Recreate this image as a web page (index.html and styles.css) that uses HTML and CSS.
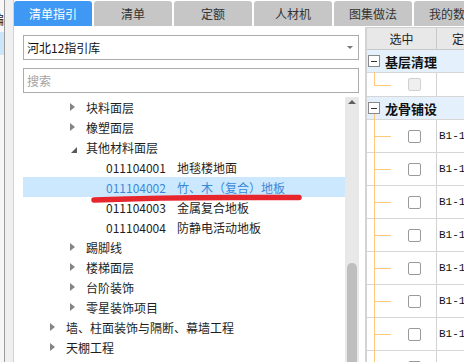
FILE: index.html
```html
<!DOCTYPE html>
<html>
  <head>
    <title>清单指引</title>
    <link rel="stylesheet" href="styles.css">
  </head>
  <body>
    <div class="app">
      <div class="side">
        <div class="side-edge">
          <div class="side-top"><span class="side-glyph">编</span></div>
          <div class="side-sel"></div>
        </div>
        <div class="side-fill"></div>
      </div>

      <div class="main">
        <div class="tabs">
          <div class="tab active">清单指引</div>
          <div class="tab">清单</div>
          <div class="tab">定额</div>
          <div class="tab">人材机</div>
          <div class="tab">图集做法</div>
          <div class="tab">我的数据</div>
        </div>

        <div class="content">
          <div class="guide">
            <div class="select">河北12指引库<span class="caret"></span></div>
            <div class="search">搜索</div>

            <div class="tree-wrap">
              <div class="tree">
                <div class="node l2"><svg class="arrow" viewBox="0 0 5 8"><polygon points="0,0 5,4 0,8" /></svg>块料面层</div>
                <div class="node l2"><svg class="arrow" viewBox="0 0 5 8"><polygon points="0,0 5,4 0,8" /></svg>橡塑面层</div>
                <div class="node l2"><svg class="arrow open" viewBox="0 0 6 6"><polygon points="6,0 6,6 0,6" /></svg>其他材料面层</div>
                <div class="node l3"><span class="code">011104001</span>地毯楼地面</div>
                <div class="node l3 selected"><span class="code">011104002</span>竹、木（复合）地板</div>
                <div class="node l3"><span class="code">011104003</span>金属复合地板</div>
                <div class="node l3"><span class="code">011104004</span>防静电活动地板</div>
                <div class="node l2"><svg class="arrow" viewBox="0 0 5 8"><polygon points="0,0 5,4 0,8" /></svg>踢脚线</div>
                <div class="node l2"><svg class="arrow" viewBox="0 0 5 8"><polygon points="0,0 5,4 0,8" /></svg>楼梯面层</div>
                <div class="node l2"><svg class="arrow" viewBox="0 0 5 8"><polygon points="0,0 5,4 0,8" /></svg>台阶装饰</div>
                <div class="node l2"><svg class="arrow" viewBox="0 0 5 8"><polygon points="0,0 5,4 0,8" /></svg>零星装饰项目</div>
                <div class="node l1"><svg class="arrow" viewBox="0 0 5 8"><polygon points="0,0 5,4 0,8" /></svg>墙、柱面装饰与隔断、幕墙工程</div>
                <div class="node l1"><svg class="arrow" viewBox="0 0 5 8"><polygon points="0,0 5,4 0,8" /></svg>天棚工程</div>
              </div>
              <div class="scrollbar">
                <span class="scroll-up"></span>
                <div class="thumb"></div>
              </div>
            </div>

            <!-- red hand-drawn underline over the selected item -->
            <svg class="mark" viewBox="0 0 351 335">
              <path d="M80 173 Q146 170.5 218 170.5 L285 170.5" />
            </svg>
          </div>

          <div class="grid">
            <div class="row head">
              <div class="c1">选中</div>
              <div class="c2">定额编号</div>
            </div>
            <div class="row group">
              <span class="minus"><span></span></span><b>基层清理</b>
            </div>
            <div class="row short">
              <div class="c1 child last"><span class="check off"></span></div>
              <div class="c2"></div>
            </div>
            <div class="row group more">
              <span class="minus"><span></span></span><b>龙骨铺设</b>
            </div>
            <div class="row item">
              <div class="c1 child"><span class="check"></span></div>
              <div class="c2">B1-15</div>
            </div>
            <div class="row item">
              <div class="c1 child"><span class="check"></span></div>
              <div class="c2">B1-15</div>
            </div>
            <div class="row item">
              <div class="c1 child"><span class="check"></span></div>
              <div class="c2">B1-15</div>
            </div>
            <div class="row item">
              <div class="c1 child"><span class="check"></span></div>
              <div class="c2">B1-15</div>
            </div>
            <div class="row item">
              <div class="c1 child"><span class="check"></span></div>
              <div class="c2">B1-15</div>
            </div>
            <div class="row item">
              <div class="c1 child"><span class="check"></span></div>
              <div class="c2">B1-16</div>
            </div>
            <div class="row item">
              <div class="c1 child"><span class="check"></span></div>
              <div class="c2">B1-16</div>
            </div>
            <div class="row item">
              <div class="c1 child"><span class="check"></span></div>
              <div class="c2"></div>
            </div>
          </div>
        </div>
      </div>
    </div>
  </body>
</html>
```

FILE: styles.css
```css
body {
  margin: 0;
  background: #fff;
  font-family: "Noto Sans CJK SC", "Noto Sans", sans-serif;
  font-size: 12px;
  color: #1e1e1e;
}

.app {
  display: flex;
  width: 464px;
  height: 362px;
  overflow: hidden;
}

/* left edge strip */
.side {
  display: flex;
  width: 14px;
  flex-shrink: 0;
  border-right: 1px solid #d2d2d2;
  box-sizing: border-box;
}

.side-edge {
  width: 5px;
  border-right: 1px solid #9c9c9c;
  box-sizing: border-box;
  overflow: hidden;
  background: #f7f7f7;
}

.side-top {
  height: 32px;
  padding-top: 12px;
  box-sizing: border-box;
  line-height: 14px;
  white-space: nowrap;
}

.side-glyph {
  display: inline-block;
  margin-left: -9px;
  font-size: 13px;
}

.side-sel {
  height: 23px;
  background: #cde5f8;
}

.side-fill {
  flex: 1;
  background: #f0f0f0;
}

.main {
  flex: 1;
  min-width: 0;
  display: flex;
  flex-direction: column;
}

/* tabs */
.tabs {
  display: flex;
  gap: 2px;
  height: 27px;
  padding-top: 1px;
  box-sizing: border-box;
  overflow: hidden;
}

.tab {
  flex: 0 0 78px;
  height: 25px;
  line-height: 25px;
  text-align: center;
  background: #c6c6c6;
  color: #333;
  border-radius: 3px 3px 0 0;
}

.tab.active {
  background: #3f98f3;
  color: #fff;
}

.content {
  flex: 1;
  min-height: 0;
  display: flex;
}

/* guide panel */
.guide {
  position: relative;
  width: 351px;
  flex-shrink: 0;
  padding: 8px 6px 0 9px;
  box-sizing: border-box;
  display: flex;
  flex-direction: column;
}

.select, .search {
  height: 25px;
  border: 1px solid #acacac;
  box-sizing: border-box;
  padding: 0 3px;
  display: flex;
  align-items: center;
}

.select {
  justify-content: space-between;
  color: #111;
}

.caret {
  width: 0;
  height: 0;
  border-left: 3px solid transparent;
  border-right: 3px solid transparent;
  border-top: 3px solid #777;
  margin-right: 2px;
}

.search {
  margin-top: 8px;
  color: #a3a3a3;
}

.tree-wrap {
  margin-top: 4px;
  flex: 1;
  min-height: 0;
  display: flex;
  overflow: hidden;
}

.tree {
  flex: 1;
}

.node {
  height: 20px;
  display: flex;
  align-items: center;
  white-space: nowrap;
  color: #1e1e1e;
}

.node.l1 { padding-left: 27px; }
.node.l2 { padding-left: 47px; }
.node.l3 { padding-left: 83px; }

.node.selected {
  background: #cce8ff;
  color: #3a88d8;
}

.arrow {
  width: 5px;
  height: 8px;
  margin-right: 11px;
  fill: #858585;
}

.arrow.open {
  width: 6px;
  height: 6px;
  margin: 6px 9px 0 1px;
  fill: #5a5a5a;
}

.code {
  display: inline-block;
  width: 71px;
}

.scrollbar {
  width: 14px;
  background: #e8e8e8;
  display: flex;
  flex-direction: column;
  align-items: center;
}

.scroll-up {
  margin-top: 3px;
  width: 0;
  height: 0;
  border-left: 4px solid transparent;
  border-right: 4px solid transparent;
  border-bottom: 4px solid #606060;
}

.thumb {
  margin-top: 159px;
  flex: 1;
  width: 10px;
  background: #bebebe;
  border-radius: 5px 5px 0 0;
}

.mark {
  position: absolute;
  left: 0;
  top: 0;
  width: 351px;
  height: 335px;
  pointer-events: none;
}

.mark path {
  fill: none;
  stroke: #e6252d;
  stroke-width: 5.5;
  stroke-linecap: round;
}

/* right grid */
.grid {
  flex: 1;
  min-width: 0;
  border-left: 2px solid #d3d3d3;
  display: flex;
  flex-direction: column;
  overflow: hidden;
}

.row {
  display: flex;
  flex-shrink: 0;
  border-bottom: 1px solid #d6d6d6;
  box-sizing: border-box;
}

.c1 {
  width: 70px;
  flex-shrink: 0;
  border-right: 1px solid #d3d3d3;
  box-sizing: border-box;
}

.c2 {
  flex: 1;
  white-space: nowrap;
  overflow: hidden;
}

.row.head {
  height: 23px;
  background: #e8e8e8;
  border-top: 1px solid #d0d0d0;
  border-bottom-color: #c8c8c8;
  line-height: 21px;
}

.head .c1 {
  text-align: center;
  border-right-color: #c8c8c8;
}

.head .c2 {
  padding-left: 15px;
}

.row.group {
  position: relative;
  height: 23px;
  background: #e4f1fc;
  align-items: center;
  padding-left: 1px;
}

.group b {
  margin-left: 5px;
  font-size: 13px;
  color: #111;
  white-space: nowrap;
}

.minus {
  width: 12px;
  height: 12px;
  flex-shrink: 0;
  border: 1px solid #8a8a8a;
  box-sizing: border-box;
  background: #fff;
  display: flex;
  align-items: center;
  justify-content: center;
}

.minus span {
  width: 6px;
  height: 1px;
  background: #333;
}

.row.group.more::after {
  content: "";
  position: absolute;
  left: 7px;
  top: 17px;
  bottom: -1px;
  width: 1px;
  background: #ffc87a;
}

.row.short { height: 24px; }
.row.item { height: 33px; }

.child {
  position: relative;
  display: flex;
  align-items: center;
  padding-left: 41px;
}

.child::before {
  content: "";
  position: absolute;
  left: 7px;
  top: -1px;
  bottom: -1px;
  width: 1px;
  background: #ffc87a;
}

.child.last::before {
  bottom: 50%;
}

.child::after {
  content: "";
  position: absolute;
  left: 7px;
  top: 50%;
  width: 17px;
  height: 1px;
  background: #ffc87a;
}

.check {
  width: 13px;
  height: 13px;
  border: 1px solid #9a9a9a;
  border-radius: 2px;
  box-sizing: border-box;
  background: #fff;
}

.check.off {
  background: #efefef;
  border-color: #d0d0d0;
}

.item .c2 {
  display: flex;
  align-items: center;
  padding-left: 2px;
  font-family: "Liberation Mono", monospace;
  font-size: 11px;
  color: #111;
}
```
